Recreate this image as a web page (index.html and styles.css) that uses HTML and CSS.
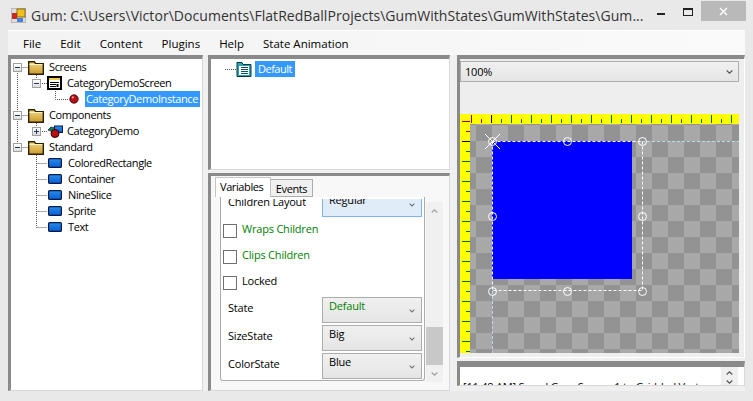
FILE: index.html
```html
<!DOCTYPE html>
<html lang="en">
  <head>
    <meta charset="UTF-8" />
    <title>Gum</title>
    <link rel="stylesheet" href="styles.css">
  </head>
  <body>
    <svg class="defs" width="0" height="0">
      <defs>
        <linearGradient id="gold" x1="0" y1="0" x2="0" y2="1">
          <stop offset="0" stop-color="#f6dc86"/>
          <stop offset="1" stop-color="#c9982c"/>
        </linearGradient>
        <linearGradient id="blue" x1="0" y1="0" x2="0" y2="1">
          <stop offset="0" stop-color="#2b8cf0"/>
          <stop offset="1" stop-color="#0a5cd0"/>
        </linearGradient>
      </defs>
      <symbol id="folder" viewBox="0 0 16 15">
        <path d="M.7 14.3V1.7h5.6l1.4 2h7.6v10.6z" fill="url(#gold)" stroke="#2b2000" stroke-width="1.4"/>
        <path d="M1.5 4.5h13" stroke="#fff3bb"/>
      </symbol>
      <symbol id="screen" viewBox="0 0 15 14">
        <rect x="1" y="1" width="13" height="12" fill="#fff" stroke="#000" stroke-width="2"/>
        <rect x="2" y="2" width="11" height="2" fill="#f3c93c"/>
        <path d="M3 6.5h9M3 8.5h6M3 10.5h6" stroke="#000"/>
        <path d="M10.5 8v3" stroke="#000" stroke-width="2"/>
      </symbol>
      <symbol id="standard" viewBox="0 0 14 10">
        <rect x=".6" y=".6" width="12.8" height="8.8" rx="1" fill="url(#blue)" stroke="#021a4a" stroke-width="1.2"/>
      </symbol>
      <symbol id="ball" viewBox="0 0 10 10">
        <circle cx="5" cy="5" r="4.2" fill="#b80d12" stroke="#2a0505" stroke-width=".8"/>
        <circle cx="3.8" cy="3.4" r="1.1" fill="#f6a0a0"/>
      </symbol>
      <symbol id="states" viewBox="0 0 16 16">
        <path d="M1 3.5V1.5h5l1 2h8v12H1z" fill="#29a6b4" stroke="#06343c"/>
        <rect x="3" y="5" width="10" height="9" fill="#fff"/>
        <path d="M5 6.5h7M5 8.5h7M5 10.5h7M5 12.5h7" stroke="#14505c"/>
      </symbol>
      <symbol id="chev" viewBox="0 0 7 4">
        <path d="M.7.5l2.8 2.6L6.3.5" fill="none" stroke="#555" stroke-width="1.2"/>
      </symbol>
    </svg>

    <div class="window">
      <header class="titlebar">
        <svg class="app-icon" width="15" height="15" viewBox="0 0 15 15">
          <rect x=".5" y=".5" width="14" height="14" fill="#ddd" stroke="#bbb"/>
          <rect x="6" y="1" width="8" height="8" fill="#f0c020" stroke="#8a6a10"/>
          <rect x="1" y="5" width="5" height="6" fill="#c8281e"/>
          <rect x="6" y="10" width="6" height="4" fill="#4a80d8"/>
        </svg>
        <span class="title">Gum: C:\Users\Victor\Documents\FlatRedBallProjects\GumWithStates\GumWithStates\Gum...</span>
        <div class="win-buttons">
          <span class="win-min"></span>
          <span class="win-max"></span>
          <span class="win-close">
            <svg width="9" height="9" viewBox="0 0 9 9"><path d="M1 1l7 7M8 1L1 8" stroke="#fff" stroke-width="1.4"/></svg>
          </span>
        </div>
      </header>

      <div class="client">
        <nav class="menubar">
          <span>File</span>
          <span>Edit</span>
          <span>Content</span>
          <span>Plugins</span>
          <span>Help</span>
          <span>State Animation</span>
        </nav>

        <div class="panes">
          <section class="pane tree">
            <svg class="tree-lines" width="190" height="190">
              <path d="M6.5 8V88M6.5 8.5H17M6.5 56.5H17M6.5 88.5H17M25.5 8V24.5H36M44.5 30V40.5H57M25.5 56V72.5H36M25.5 88V168.5M25.5 104.5H36M25.5 120.5H36M25.5 136.5H36M25.5 152.5H36M25.5 168.5H36" fill="none" stroke="#555" stroke-dasharray="1 1"/>
            </svg>
            <div class="node"><i class="exp"></i><svg class="ic-folder"><use href="#folder"/></svg><span>Screens</span></div>
            <div class="node lv1"><i class="exp"></i><svg class="ic-screen"><use href="#screen"/></svg><span>CategoryDemoScreen</span></div>
            <div class="node lv2"><svg class="ic-ball"><use href="#ball"/></svg><span class="selected">CategoryDemoInstance</span></div>
            <div class="node"><i class="exp"></i><svg class="ic-folder"><use href="#folder"/></svg><span>Components</span></div>
            <div class="node lv1"><i class="exp plus"></i>
              <svg class="ic-comp" viewBox="0 0 15 13">
                <path d="M0 5l3-3 4 1-2 4z" fill="#1c7a4c" stroke="#06343c" stroke-width=".8"/>
                <rect x="6.5" y="1" width="8" height="6.5" fill="url(#blue)" stroke="#021a4a"/>
                <circle cx="7" cy="8.5" r="4" fill="#b80d12" stroke="#2a0505"/>
              </svg>
              <span>CategoryDemo</span></div>
            <div class="node"><i class="exp"></i><svg class="ic-folder"><use href="#folder"/></svg><span>Standard</span></div>
            <div class="node lv1 leaf"><svg class="ic-std"><use href="#standard"/></svg><span>ColoredRectangle</span></div>
            <div class="node lv1 leaf"><svg class="ic-std"><use href="#standard"/></svg><span>Container</span></div>
            <div class="node lv1 leaf"><svg class="ic-std"><use href="#standard"/></svg><span>NineSlice</span></div>
            <div class="node lv1 leaf"><svg class="ic-std"><use href="#standard"/></svg><span>Sprite</span></div>
            <div class="node lv1 leaf"><svg class="ic-std"><use href="#standard"/></svg><span>Text</span></div>
          </section>

          <div class="middle">
            <section class="pane states">
              <i class="state-line"></i>
              <svg class="ic-states"><use href="#states"/></svg>
              <span class="selected">Default</span>
            </section>

            <section class="pane props">
              <div class="tabs">
                <span class="tab active">Variables</span>
                <span class="tab">Events</span>
              </div>
              <div class="tab-body">
                <div class="tab-page">
                  <div class="scroll-content">
                    <div class="prop-row clipped">
                      <label>Children Layout</label>
                      <div class="select focused"><span>Regular</span><svg class="chev"><use href="#chev"/></svg></div>
                    </div>
                    <div class="check-row green"><i class="check"></i><span>Wraps Children</span></div>
                    <div class="check-row green"><i class="check"></i><span>Clips Children</span></div>
                    <div class="check-row"><i class="check"></i><span>Locked</span></div>
                    <div class="prop-row">
                      <label>State</label>
                      <div class="select green"><span>Default</span><svg class="chev"><use href="#chev"/></svg></div>
                    </div>
                    <div class="prop-row">
                      <label>SizeState</label>
                      <div class="select"><span>Big</span><svg class="chev"><use href="#chev"/></svg></div>
                    </div>
                    <div class="prop-row">
                      <label>ColorState</label>
                      <div class="select"><span>Blue</span><svg class="chev"><use href="#chev"/></svg></div>
                    </div>
                  </div>
                </div>
                <div class="scrollbar">
                  <svg class="chev up"><use href="#chev"/></svg>
                  <div class="thumb"></div>
                  <svg class="chev"><use href="#chev"/></svg>
                </div>
              </div>
            </section>
          </div>

          <div class="right">
            <section class="pane preview">
              <div class="zoom-select"><span>100%</span><svg class="chev"><use href="#chev"/></svg></div>
              <div class="toolstrip"></div>
              <svg class="canvas" width="279" height="239" viewBox="460 114 279 239" id="canvas"></svg>
            </section>
            <section class="pane output">
              <div class="output-text">[11:48 AM] Saved Gum Screen 1 to Gridded Vert</div>
              <div class="output-scroll">
                <svg class="chev up"><use href="#chev"/></svg>
                <svg class="chev"><use href="#chev"/></svg>
              </div>
            </section>
          </div>
        </div>
      </div>
    </div>

    <script>
      // canvas is generated: checker, rulers, then the selected sprite and its handles
      const NS = "http://www.w3.org/2000/svg";
      const canvas = document.getElementById("canvas");

      function add(tag, attrs) {
        const el = document.createElementNS(NS, tag);
        for (const key in attrs) el.setAttribute(key, attrs[key]);
        canvas.appendChild(el);
        return el;
      }

      add("rect", { x: 460, y: 114, width: 279, height: 239, fill: "#a8a8a8" });
      for (let row = -1; row < 15; row++) {
        for (let col = -1; col < 17; col++) {
          if ((row + col) % 2 === 0) {
            add("rect", { x: 476 + col * 16, y: 125 + row * 16, width: 16, height: 16, fill: "#939393" });
          }
        }
      }

      add("rect", { x: 492, y: 141, width: 140, height: 138, fill: "#0000ff" });

      // guides through the origin
      add("path", { d: "M492.5 291V353M642 141.5H739", stroke: "#b9dcea", "stroke-dasharray": "3 2", fill: "none" });
      // selection outline
      add("rect", { x: 492.5, y: 141.5, width: 150, height: 149, fill: "none", stroke: "#fff", "stroke-dasharray": "3 2" });

      // rulers
      add("rect", { x: 460, y: 114, width: 279, height: 10, fill: "#ffff00" });
      add("rect", { x: 460, y: 114, width: 10, height: 239, fill: "#ffff00" });
      function tickColor(n) {
        return n < 2 ? "#a00000" : n === 2 ? "#000" : "#007000";
      }
      for (let n = 0; n < 27; n++) {
        const x = 471.5 + n * 10;
        const top = n % 2 ? 119 : 115;
        add("path", { d: `M${x} ${top}V123`, stroke: tickColor(n) });
      }
      for (let n = 0; n < 24; n++) {
        const y = 121.5 + n * 10;
        const left = n % 2 ? 466 : 462;
        add("path", { d: `M${left} ${y}H470`, stroke: tickColor(n) });
      }

      // handles
      const handles = [[492, 141], [567, 141], [642, 141], [492, 216], [642, 216], [492, 291], [567, 291], [642, 291]];
      handles.forEach(([x, y]) => {
        add("circle", { cx: x + 0.5, cy: y + 0.5, r: 4, fill: "none", stroke: "#fff" });
      });
      add("path", { d: "M485 134L500 149M500 134L485 149", stroke: "#fff" });
    </script>
  </body>
</html>
```

FILE: styles.css
```css
* {
  box-sizing: border-box;
}
html,
body {
  margin: 0;
  height: 100%;
  overflow: hidden;
}
body {
  font-family: "Open Sans", sans-serif;
  font-size: 11px;
  letter-spacing: -0.2px;
  color: #000;
}
svg {
  flex: none;
}
.defs {
  position: absolute;
}
.window {
  width: 753px;
  height: 401px;
  padding: 0 8px 10px 8px;
  background-color: #e9e9e9;
  display: flex;
  flex-direction: column;
}

/* title bar */
.titlebar {
  height: 30px;
  flex: none;
  display: flex;
  align-items: flex-start;
  margin-right: -1px;
}
.app-icon {
  margin: 8px 0 0 3px;
}
.title {
  margin: 6px 0 0 5px;
  font-size: 14px;
  letter-spacing: 0.05px;
  line-height: 20px;
  color: #333;
  white-space: nowrap;
}
.win-buttons {
  margin-left: auto;
  display: flex;
  align-items: flex-start;
}
.win-min {
  width: 8px;
  height: 2px;
  margin: 13px 18px 0 0;
  background-color: #222;
}
.win-max {
  width: 10px;
  height: 8px;
  margin: 8px 8px 0 0;
  border: 1px solid #222;
  border-top-width: 2px;
}
.win-close {
  width: 45px;
  height: 20px;
  margin-top: 1px;
  background-color: #b9b9b9;
  display: flex;
  align-items: center;
  justify-content: center;
}

/* client area */
.client {
  flex: 1;
  display: flex;
  flex-direction: column;
  min-height: 0;
  background-color: #f0f0f0;
  border-top: 1px solid #fff;
}
.menubar {
  height: 24px;
  flex: none;
  display: flex;
  align-items: center;
  padding-left: 15px;
  gap: 19px;
  background: linear-gradient(to right, #f3f3f3, #fafafa);
  font-size: 11.5px;
  letter-spacing: 0;
}
.panes {
  flex: 1;
  min-height: 0;
  display: flex;
  gap: 5px;
}
.pane {
  background-color: #fff;
  border-style: solid;
  border-color: #8a8a8a #d8d8d8 #d8d8d8 #8a8a8a;
  border-width: 4px 1px 1px 3px;
}
.selected {
  background-color: #3399ff;
  color: #fff;
}

/* left tree */
.tree {
  position: relative;
  width: 195px;
  letter-spacing: -0.4px;
}
.tree-lines {
  position: absolute;
  left: 0;
  top: 0;
}
.node {
  position: relative;
  height: 16px;
  display: flex;
  align-items: center;
  white-space: nowrap;
}
.tree .node span {
  line-height: 16px;
  padding: 0 2px;
}
.tree .node .selected {
  padding: 0 2px 0 1px;
}
.exp {
  width: 9px;
  height: 9px;
  flex: none;
  margin-left: 2px;
  border: 1px solid #a0a0a0;
  background: linear-gradient(#fff, #dcdcdc);
  position: relative;
}
.exp::before {
  content: "";
  position: absolute;
  left: 1px;
  top: 3px;
  width: 5px;
  height: 1px;
  background-color: #1d3a5c;
}
.exp.plus::after {
  content: "";
  position: absolute;
  left: 3px;
  top: 1px;
  width: 1px;
  height: 5px;
  background-color: #1d3a5c;
}
.ic-folder {
  width: 16px;
  height: 15px;
  margin-left: 6px;
  margin-right: 3px;
}
.lv1 {
  padding-left: 19px;
}
.ic-screen {
  width: 15px;
  height: 14px;
  margin-left: 6px;
  margin-right: 3px;
}
.ic-comp {
  width: 15px;
  height: 13px;
  margin-left: 7px;
  margin-right: 2px;
}
.ic-ball {
  width: 10px;
  height: 10px;
  margin-left: 58px;
  margin-right: 6px;
}
.ic-std {
  width: 14px;
  height: 10px;
  margin-left: 18px;
  margin-right: 4px;
}

/* middle column */
.middle {
  width: 242px;
  display: flex;
  flex-direction: column;
  gap: 3px;
}
.states {
  height: 115px;
  display: flex;
  align-items: flex-start;
  padding-top: 2px;
}
.state-line {
  width: 11px;
  margin: 8px 0 0 14px;
  border-top: 1px dotted #555;
}
.ic-states {
  width: 16px;
  height: 16px;
  margin: 0 3px 0 0;
}
.states .selected {
  padding: 0 3px;
  line-height: 16px;
  letter-spacing: -0.5px;
}
.props {
  flex: 1;
  min-height: 0;
  background-color: #f8f8f8;
  border-top-width: 3px;
  padding: 1px 0 0 4px;
  display: flex;
  flex-direction: column;
}
.tabs {
  display: flex;
  align-items: flex-end;
  height: 20px;
  flex: none;
  letter-spacing: -0.4px;
}
.tab {
  width: 42px;
  height: 18px;
  border: 1px solid #acacac;
  border-left: none;
  background-color: #f0f0f0;
  text-align: center;
  line-height: 17px;
}
.tab.active {
  width: 56px;
  height: 20px;
  border: 1px solid #c4c4c4;
  border-bottom: none;
  background-color: #fff;
  text-align: left;
  padding-left: 4px;
  line-height: 18px;
}
.tab-body {
  flex: 1;
  min-height: 0;
  display: flex;
  margin-left: 5px;
  padding-bottom: 8px;
  gap: 1px;
}
.tab-page {
  width: 205px;
  margin-bottom: 1px;
  border: 1px solid #acacac;
  border-top: none;
  border-radius: 0 0 3px 3px;
  background-color: #fff;
  padding: 2px 0 0 2px;
  display: flex;
  flex-direction: column;
}
.scroll-content {
  flex: 1;
  min-height: 0;
  overflow: hidden;
}
.scrollbar {
  width: 17px;
  margin-top: 5px;
  background-color: #f0f0f0;
  display: flex;
  flex-direction: column;
  align-items: center;
}
.scrollbar .chev {
  opacity: 0.5;
}
.thumb {
  width: 17px;
  height: 38px;
  margin-top: 114px;
  background-color: #c8c8c8;
}
.chev {
  width: 7px;
  height: 4px;
}
.chev.up {
  transform: rotate(180deg);
}
.scrollbar .chev.up {
  margin-top: 7px;
}
.scrollbar .chev:last-child {
  margin-top: 7px;
}
.prop-row {
  height: 28px;
  display: flex;
  align-items: flex-start;
  padding-left: 5px;
}
.prop-row label {
  width: 94px;
  flex: none;
  margin-top: 4px;
  line-height: 16px;
}
.prop-row.clipped {
  height: 19px;
}
.clipped label {
  margin-top: -5px;
}
.select {
  width: 100px;
  height: 26px;
  margin-top: 1px;
  border: 1px solid #adadad;
  background: linear-gradient(#f0f0f0, #e5e5e5);
  display: flex;
  justify-content: space-between;
  padding-left: 6px;
  line-height: 16px;
}
.select .chev {
  width: 6px;
  margin: 11px 6px 0 0;
  opacity: 0.8;
}
.select.focused {
  margin-top: -8px;
  background: #e1ecf9;
  border-color: #7eb4ea;
}
.green {
  color: #008000;
}
.check-row {
  height: 26px;
  display: flex;
  align-items: center;
  gap: 5px;
}
.check-row span {
  margin-top: -5px;
}
.check {
  width: 14px;
  height: 14px;
  border: 1px solid #707070;
  background-color: #fff;
}

/* right column */
.right {
  flex: 1;
  min-width: 0;
  margin-left: 2px;
  padding-bottom: 5px;
  display: flex;
  flex-direction: column;
  gap: 3px;
}
.preview {
  height: 303px;
  background-color: #eeeeee;
  border-color: #8a8a8a #fff #fff #8a8a8a;
  padding: 2px 5px 0 0;
}
.zoom-select {
  height: 21px;
  border: 1px solid #adadad;
  background: linear-gradient(#f0f0f0, #e5e5e5);
  display: flex;
  align-items: center;
  justify-content: space-between;
  padding: 0 5px 0 4px;
}
.toolstrip {
  height: 32px;
}
.canvas {
  display: block;
}
.output {
  flex: 1;
  min-height: 0;
  display: flex;
  overflow: hidden;
  border-width: 6px 1px 1px 3px;
}
.output-text {
  flex: 1;
  min-width: 0;
  padding: 12px 0 0 3px;
  line-height: 16px;
  white-space: nowrap;
  overflow: hidden;
}
.output-scroll {
  width: 17px;
  margin-right: 6px;
  background-color: #f0f0f0;
  display: flex;
  flex-direction: column;
  align-items: center;
  gap: 5px;
  padding-top: 4px;
}
```
